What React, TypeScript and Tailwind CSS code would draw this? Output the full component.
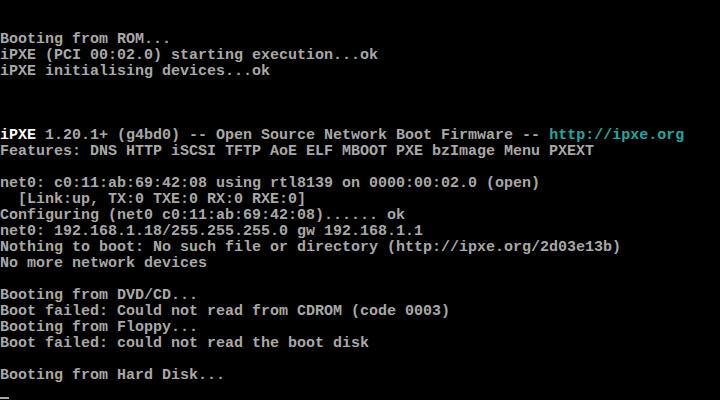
const gray = "text-[#a8a8a8]";

type Line = React.ReactNode;

const lines: Line[] = [
  "",
  "",
  "Booting from ROM...",
  "iPXE (PCI 00:02.0) starting execution...ok",
  "iPXE initialising devices...ok",
  "",
  "",
  "",
  <>
    <span className="text-white">iPXE</span> 1.20.1+ (g4bd0) -- Open Source Network Boot Firmware --{" "}
    <span className="text-[#20a8a2]">http://ipxe.org</span>
  </>,
  "Features: DNS HTTP iSCSI TFTP AoE ELF MBOOT PXE bzImage Menu PXEXT",
  "",
  "net0: c0:11:ab:69:42:08 using rtl8139 on 0000:00:02.0 (open)",
  "  [Link:up, TX:0 TXE:0 RX:0 RXE:0]",
  "Configuring (net0 c0:11:ab:69:42:08)...... ok",
  "net0: 192.168.1.18/255.255.255.0 gw 192.168.1.1",
  "Nothing to boot: No such file or directory (http://ipxe.org/2d03e13b)",
  "No more network devices",
  "",
  "Booting from DVD/CD...",
  "Boot failed: Could not read from CDROM (code 0003)",
  "Booting from Floppy...",
  "Boot failed: could not read the boot disk",
  "",
  "Booting from Hard Disk...",
];

export default function App() {
  return (
    <div className="w-[720px] h-[400px] bg-black overflow-hidden">
      <div
        className={`flex flex-col font-['Liberation_Mono',monospace] text-[15px] leading-[16px] font-bold whitespace-pre ${gray}`}
      >
        {lines.map((line, i) => (
          <div key={i} className="h-4">
            {line}
          </div>
        ))}
        {/* blinking text-mode cursor */}
        <div className="h-4 flex items-end pb-[1px]">
          <div className="w-[9px] h-[2px] bg-[#a8a8a8]" />
        </div>
      </div>
    </div>
  );
}
